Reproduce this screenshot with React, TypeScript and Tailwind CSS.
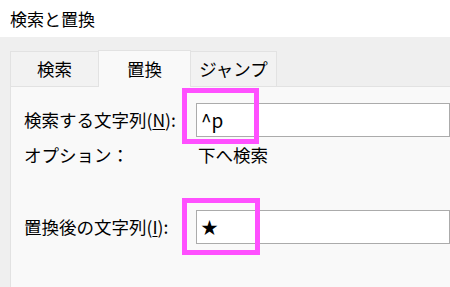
export default function App() {
  const font = { fontFamily: '"Noto Sans CJK JP", "Noto Sans", sans-serif' };
  return (
    <div className="relative w-[450px] h-[287px] overflow-hidden bg-[#efefef] text-black" style={font}>
      {/* Title */}
      <div className="h-[37px] bg-white flex items-center pl-[10px] text-[17px]">検索と置換</div>

      {/* Tabs */}
      <div className="pl-[10px] pt-[12px]">
        <div className="flex items-end h-[37px]">
          <div className="w-[88px] h-[35px] border-l border-t border-[#e2e2e2] bg-[#f2f2f2] flex items-center justify-center text-[17.5px]">
            検索
          </div>
          <div className="relative z-10 w-[93px] h-[37px] -mb-px border border-b-0 border-[#e2e2e2] bg-[#f9f9f9] flex items-center justify-center text-[17.5px]">
            置換
          </div>
          <div className="w-[86px] h-[35px] border-t border-r border-[#e2e2e2] bg-[#f2f2f2] flex items-center justify-center text-[17.5px]">
            ジャンプ
          </div>
        </div>

        {/* Panel */}
        <div className="h-[220px] border-l border-t border-[#e2e2e2] bg-[#f9f9f9] pl-[13px] pt-[16px] text-[17.5px]">
          <div className="flex items-center">
            <div className="w-[172px]">
              検索する文字列(<span className="underline underline-offset-2">N</span>):
            </div>
            <div className="flex-1 h-[34px] bg-white border border-[#ababab] flex items-center pl-[4px] text-[19px]">^p</div>
          </div>
          <div className="flex items-center mt-[6px] h-[24px]">
            <div className="w-[174px]">オプション：</div>
            <div>下へ検索</div>
          </div>
          <div className="flex items-center mt-[43px]">
            <div className="w-[172px]">
              置換後の文字列(<span className="underline underline-offset-2">I</span>):
            </div>
            <div className="flex-1 h-[34px] bg-white border border-[#ababab] flex items-center pl-[4px] text-[17px]">★</div>
          </div>
        </div>
      </div>

      {/* Highlight boxes */}
      <div className="absolute left-[182px] top-[88px] w-[77px] h-[56px] border-[5px] border-[#ff50ff]" />
      <div className="absolute left-[182px] top-[198px] w-[78px] h-[57px] border-[5px] border-[#ff50ff]" />
    </div>
  );
}
